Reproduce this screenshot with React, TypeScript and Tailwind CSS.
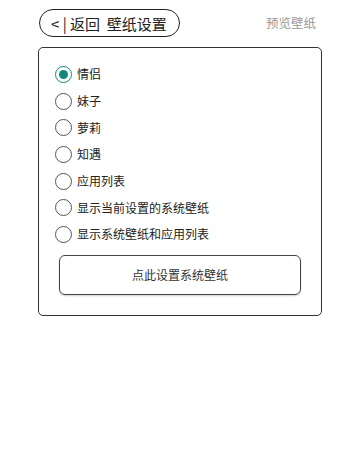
import { useState } from 'react'

const options = ['情侣', '妹子', '萝莉', '知遇', '应用列表', '显示当前设置的系统壁纸', '显示系统壁纸和应用列表']

export default function App() {
  const [selected, setSelected] = useState(0)

  return (
    <div
      className="w-[350px] h-[473px] bg-white text-[#222]"
      style={{ fontFamily: '"Noto Sans CJK SC", "Noto Sans", sans-serif' }}
    >
      {/* Header */}
      <div className="flex items-center justify-between pl-[39px] pr-[34px] pt-[9px]">
        <button className="h-[28px] w-[141px] flex items-center border-[1.5px] border-[#222] rounded-full pl-[11px] text-[15px] leading-none whitespace-nowrap">
          <span>&lt; | 返回&nbsp;&nbsp;壁纸设置</span>
        </button>
        <span className="text-[12.5px] text-[#999] mt-[1px]">预览壁纸</span>
      </div>

      {/* Card */}
      <div className="ml-[38px] mt-[10px] w-[284px] h-[269px] border-[1.5px] border-[#333] rounded-[5px] pt-[13px]">
        <div className="flex flex-col pl-[16px]">
          {options.map((label, i) => (
            <label
              key={label}
              className="flex items-center h-[26.7px] gap-[5px] cursor-pointer"
              onClick={() => setSelected(i)}
            >
              <span
                className={
                  i === selected
                    ? 'w-[17px] h-[17px] rounded-full border-[1.5px] border-[#0f8a78] flex items-center justify-center'
                    : 'w-[17px] h-[17px] rounded-full border-[1.5px] border-[#555]'
                }
              >
                {i === selected && <span className="w-[9px] h-[9px] rounded-full bg-[#0f8a78]" />}
              </span>
              <span className="text-[12px] leading-none">{label}</span>
            </label>
          ))}
        </div>
        <div className="px-[20px] mt-[7px]">
          <button className="w-full h-[40px] border-[1.5px] border-[#444] rounded-[6px] text-[12px] text-[#333] shadow-[0_1px_2px_rgba(0,0,0,0.2)]">
            点此设置系统壁纸
          </button>
        </div>
      </div>
    </div>
  )
}
